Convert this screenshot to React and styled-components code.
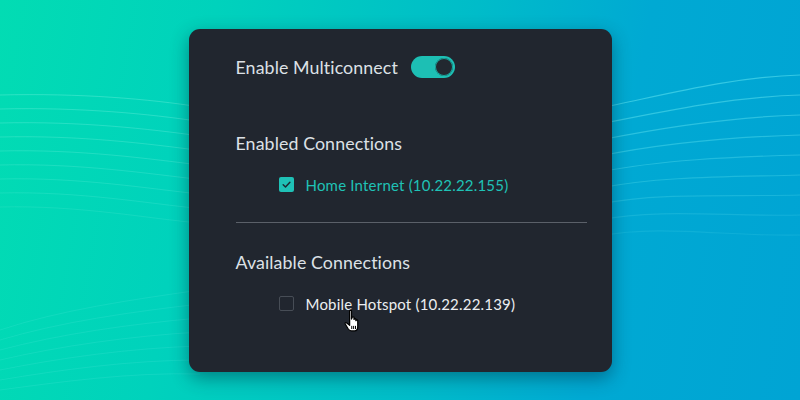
import React from "react";
import styled, { createGlobalStyle } from "styled-components";

const Global = createGlobalStyle`
  html, body { margin: 0; padding: 0; }
  body { font-family: Lato, "Noto Sans", sans-serif; }
`;

const Stage = styled.div`
  position: relative;
  width: 800px;
  height: 400px;
  overflow: hidden;
  background: linear-gradient(100deg, #02dcb3 0%, #00d2bc 25%, #00bcc9 55%, #00a9d3 75%, #00a4d4 100%);
  display: flex;
  align-items: center;
  justify-content: center;
`;

const Waves = styled.svg`
  position: absolute;
  inset: 0;
  width: 800px;
  height: 400px;
  pointer-events: none;
`;

const Card = styled.div`
  position: relative;
  width: 423px;
  height: 343px;
  box-sizing: border-box;
  background: #21262f;
  border-radius: 11px;
  box-shadow: 0 6px 18px rgba(0, 40, 60, 0.45);
  padding: 27px 25px 0 47px;
  display: flex;
  flex-direction: column;
`;

const ToggleRow = styled.div`
  display: flex;
  align-items: center;
  gap: 13px;
  height: 22px;
`;

const Heading = styled.div`
  font-size: 17.8px;
  line-height: 22px;
  color: #dde1e6;
  letter-spacing: 0.1px;
  margin-top: ${(p) => p.$mt || 0}px;
`;

const Switch = styled.div`
  width: 44px;
  height: 22px;
  border-radius: 11px;
  background: #1dbfb4;
  display: flex;
  align-items: center;
  justify-content: flex-end;
  padding-right: 2px;
  box-sizing: border-box;
`;

const Knob = styled.div`
  width: 18px;
  height: 18px;
  border-radius: 50%;
  background: #222830;
  box-shadow: inset 0 0 0 1px #19a89f;
`;

const Item = styled.div`
  display: flex;
  align-items: center;
  gap: 12px;
  height: 20px;
  margin-left: 43px;
  margin-top: 21px;
  font-size: 15px;
  color: ${(p) => (p.$checked ? "#1fc2b6" : "#eceef1")};
  letter-spacing: 0.2px;
`;

const Box = styled.div`
  width: 15px;
  height: 15px;
  border-radius: 2px;
  box-sizing: border-box;
  background: ${(p) => (p.$checked ? "#1fc1b6" : "transparent")};
  border: ${(p) => (p.$checked ? "none" : "1px solid #474d56")};
  display: flex;
  align-items: center;
  justify-content: center;
`;

const Divider = styled.div`
  height: 1px;
  background: #5b6069;
  margin-top: 27px;
`;

const Cursor = styled.svg`
  position: absolute;
  left: 155px;
  top: 280px;
`;

function Check() {
  return (
    <svg width="11" height="11" viewBox="0 0 11 11">
      <path d="M2.2 5.8 L4.5 8 L8.9 3.2" fill="none" stroke="#1b2a33" strokeWidth="1.5" strokeLinecap="round" strokeLinejoin="round" />
    </svg>
  );
}

export default function App() {
  const lefts = [];
  for (let i = 0; i < 9; i++) {
    const y = 95 + i * 14;
    lefts.push(`M0 ${y} C 80 ${y - 2}, 150 ${y + 4 + i}, 200 ${y + 12 + i * 0.5}`);
  }
  const rights = [];
  for (let i = 0; i < 9; i++) {
    const y0 = 108 + i * 16;
    const y1 = 75 + i * 20;
    rights.push(`M600 ${y0} C 660 ${y0 - 12}, 730 ${y1 + 2}, 800 ${y1}`);
  }
  const lowers = [];
  for (let i = 0; i < 7; i++) {
    lowers.push(`M0 ${330 + i * 10} C 60 ${310 + i * 12}, 130 ${300 + i * 12}, 200 ${290 + i * 14}`);
  }
  return (
    <>
      <Global />
      <Stage>
        <Waves viewBox="0 0 800 400">
          {lefts.map((d, i) => (
            <path key={"l" + i} d={d} fill="none" stroke="#7ff3e0" strokeOpacity={0.35 - i * 0.025} strokeWidth="1" />
          ))}
          {rights.map((d, i) => (
            <path key={"r" + i} d={d} fill="none" stroke="#5fe3f0" strokeOpacity={0.55 - i * 0.05} strokeWidth="1.2" />
          ))}
          {lowers.map((d, i) => (
            <path key={"b" + i} d={d} fill="none" stroke="#60eadc" strokeOpacity={0.18} strokeWidth="1" />
          ))}
        </Waves>
        <Card>
          <ToggleRow>
            <Heading>Enable Multiconnect</Heading>
            <Switch>
              <Knob />
            </Switch>
          </ToggleRow>
          <Heading $mt={54}>Enabled Connections</Heading>
          <Item $checked>
            <Box $checked>
              <Check />
            </Box>
            Home Internet (10.22.22.155)
          </Item>
          <Divider />
          <Heading $mt={28}>Available Connections</Heading>
          <Item>
            <Box />
            Mobile Hotspot (10.22.22.139)
          </Item>
          <Cursor width="20" height="25" viewBox="0 0 16 20">
            <path
              d="M4.5 1.5 C4.5 0.7 6 0.7 6 1.5 L6 8 L6.5 6.8 C6.5 6 8 6 8 6.8 L8 8.3 C8 7.5 9.5 7.5 9.5 8.3 L9.5 9.3 C9.5 8.5 11 8.5 11 9.3 L11 14 C11 16 10 17.5 8.5 17.5 L6 17.5 C4.8 17.5 4 16.8 3.3 15.8 L1 12 C0.6 11.2 1.5 10.5 2.2 11.2 L4.5 13 Z"
              fill="#ffffff"
              stroke="#000000"
              strokeWidth="1"
              strokeLinejoin="round"
            />
            <path d="M6.2 13.5 V16 M7.7 13.5 V16 M9.2 13.5 V16" stroke="#000" strokeWidth="0.8" />
          </Cursor>
        </Card>
      </Stage>
    </>
  );
}
